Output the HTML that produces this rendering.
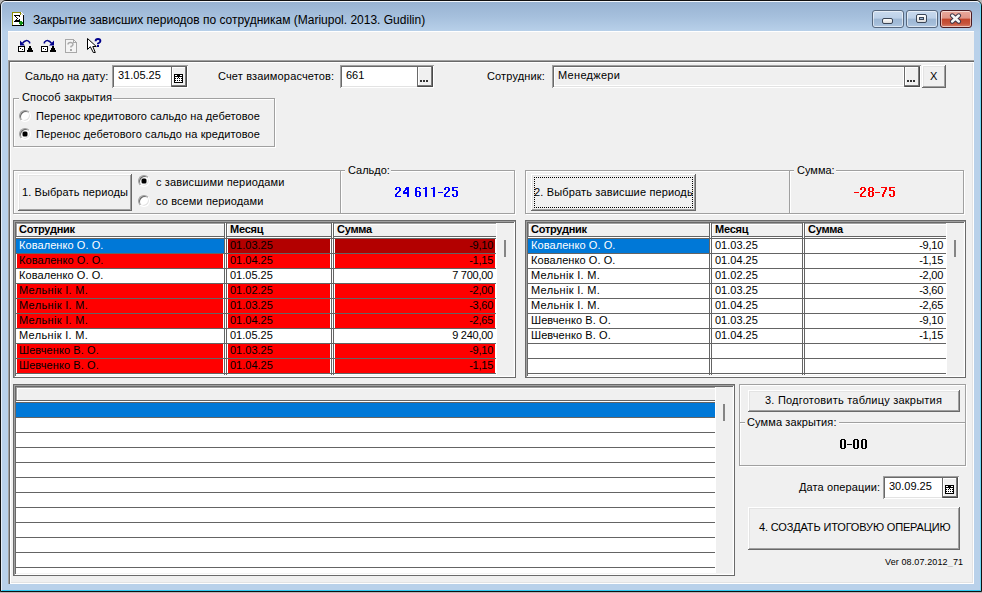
<!DOCTYPE html><html><head><meta charset="utf-8"><style>
*{box-sizing:border-box}
html,body{margin:0;padding:0}
body{width:982px;height:593px;overflow:hidden;position:relative;background:#b8b8b8;font-family:"Liberation Sans",sans-serif;font-size:11px;color:#000}
.a{position:absolute}
.t{position:absolute;white-space:pre;font-size:11px;line-height:11px}
.btn{position:absolute;background:#f0f0f0;box-shadow:inset -1px -1px #696969,inset 1px 1px #fff,inset -2px -2px #a0a0a0,inset 2px 2px #e3e3e3}
.edit{position:absolute;background:#fff;box-shadow:inset 1px 1px #a0a0a0,inset -1px -1px #fff,inset 2px 2px #696969,inset -2px -2px #e3e3e3}
.grp{position:absolute;border:1px solid #a0a0a0;box-shadow:1px 1px 0 #fff,inset 1px 1px 0 #fff}
.radio{position:absolute;width:12px;height:12px;border-radius:50%;background:#fff;border:1px solid;border-color:#a0a0a0 #fff #fff #a0a0a0;box-shadow:inset 1px 1px 0 #696969,inset -1px -1px 0 #e3e3e3}
.radio.on::after{content:"";position:absolute;left:3px;top:3px;width:4px;height:4px;border-radius:1px;background:#000;box-shadow:0 0 0 0.5px #000}
svg{position:absolute;overflow:visible}
</style></head><body>
<div class="a" style="left:0px;top:592px;width:982px;height:1px;background:#b8b8b8"></div>
<div class="a" style="left:0px;top:0px;width:982px;height:592px;border:1px solid #101010;border-radius:6px 6px 0 0;background:#b9d1ea"></div>
<div class="a" style="left:1px;top:1px;width:980px;height:590px;border-radius:5px 5px 0 0;border-top:1px solid #f2f6fb;border-left:1px solid #e4edf7;border-right:1px solid #6fd6f2;border-bottom:1px solid #2ec8f0;background:linear-gradient(#98b3d2 0,#a6c0dd 15px,#b9d1ea 30px,#b9d1ea 100%)"></div>
<svg style="left:11px;top:11px" width="16" height="16" shape-rendering="crispEdges">
<path d="M1 1H10L13 4V15H1Z" fill="#fff"/>
<rect x="1" y="1" width="1" height="13" fill="#8c8c00"/>
<rect x="1" y="1" width="9" height="1" fill="#8c8c00"/>
<rect x="9" y="1" width="1" height="3" fill="#8c8c00"/>
<rect x="10" y="2" width="1" height="1" fill="#c0c0c0"/><rect x="11" y="3" width="1" height="1" fill="#c0c0c0"/>
<rect x="12" y="4" width="1" height="11" fill="#000"/>
<rect x="1" y="14" width="12" height="1" fill="#000"/>
<path d="M3 4H9V6H8V5H5V6H6V7H7V8H6V9H5V9H8V8H9V11H3V10H4V9H5V8H6V7H5V6H4V5H3Z" fill="#000"/>
<rect x="9" y="10" width="2" height="4" fill="#119011"/>
<rect x="8" y="11" width="4" height="2" fill="#119011"/>
</svg>
<div class="t" style="left:33px;top:14px;font-size:12px;line-height:12px;color:#000;">Закрытие зависших периодов по сотрудникам (Mariupol. 2013. Gudilin)</div>
<div class="a" style="left:872px;top:10px;width:32px;height:18px;border:1px solid #56677e;border-radius:3px;background:linear-gradient(#c9daee 0,#bcd0e8 45%,#9db7d4 50%,#a4bdd9 80%,#b4cbe4 100%);box-shadow:inset 0 0 0 1px rgba(255,255,255,.55)"></div>
<div class="a" style="left:906px;top:10px;width:32px;height:18px;border:1px solid #56677e;border-radius:3px;background:linear-gradient(#c9daee 0,#bcd0e8 45%,#9db7d4 50%,#a4bdd9 80%,#b4cbe4 100%);box-shadow:inset 0 0 0 1px rgba(255,255,255,.55)"></div>
<div class="a" style="left:940px;top:10px;width:32px;height:18px;border:1px solid #4b1a20;border-radius:3px;background:linear-gradient(#eaa99c 0,#e09486 45%,#c2452b 50%,#c7553c 80%,#d9826f 100%);box-shadow:inset 0 0 0 1px rgba(255,255,255,.55)"></div>
<div class="a" style="left:882px;top:18px;width:11px;height:6px;border:1px solid #3a4556;border-radius:2px;background:linear-gradient(#fff,#dcdcdc)"></div>
<div class="a" style="left:916px;top:14px;width:11px;height:9px;border:1px solid #3a4556;border-radius:2px;background:linear-gradient(#fff,#dcdcdc)"></div>
<div class="a" style="left:919px;top:17px;width:5px;height:3px;border:1px solid #3a4556;background:#9db7d4"></div>
<svg style="left:949px;top:13px" width="13" height="11">
<path d="M3.2 2.6L9.8 8.4M9.8 2.6L3.2 8.4" stroke="#3b3346" stroke-width="4.6" stroke-linecap="round"/>
<path d="M3.2 2.6L9.8 8.4M9.8 2.6L3.2 8.4" stroke="#f6f6f6" stroke-width="2.6" stroke-linecap="round"/>
</svg>
<div class="a" style="left:8px;top:31px;width:966px;height:553px;background:#f0f0f0"></div>
<div class="a" style="left:8px;top:31px;width:966px;height:1px;background:#fff"></div>
<div class="a" style="left:8px;top:32px;width:1px;height:28px;background:#f5f3f1"></div>
<svg style="left:17px;top:37px" width="17" height="16"><g >
<path d="M5.5 6.2 Q9 1.6 12.6 5.2 L12.6 6.6" fill="none" stroke="#00008b" stroke-width="1.5"/>
<path d="M3 3.6V8.6H8z" fill="#00008b"/></g><g shape-rendering="crispEdges">
<rect x="1" y="9" width="7" height="6" fill="#000"/>
<rect x="2" y="10" width="5" height="4" fill="#fff"/>
<rect x="3" y="11" width="1" height="1" fill="#000"/><rect x="5" y="12" width="1" height="1" fill="#000"/>
<path d="M12 9h2v2h1v2h1v2h-6v-2h1v-2h1z" fill="#000"/>
</g></svg>
<svg style="left:40px;top:37px" width="17" height="16"><g transform="translate(17,0) scale(-1,1)">
<path d="M5.5 6.2 Q9 1.6 12.6 5.2 L12.6 6.6" fill="none" stroke="#00008b" stroke-width="1.5"/>
<path d="M3 3.6V8.6H8z" fill="#00008b"/></g><g shape-rendering="crispEdges">
<rect x="1" y="9" width="7" height="6" fill="#000"/>
<rect x="2" y="10" width="5" height="4" fill="#fff"/>
<rect x="3" y="11" width="1" height="1" fill="#000"/><rect x="5" y="12" width="1" height="1" fill="#000"/>
<path d="M12 9h2v2h1v2h1v2h-6v-2h1v-2h1z" fill="#000"/>
</g></svg>
<svg style="left:64px;top:38px" width="14" height="16" shape-rendering="crispEdges">
<path d="M1.5 1.5h8l3 3v9.5h-11z" fill="#f4f4f4" stroke="#a8a8a8"/>
<path d="M9.5 1.5v3h3" fill="none" stroke="#a8a8a8"/>
<path d="M4 6.5q0-2 2.5-2t2.5 2q0 1.3-2 2v1" fill="none" stroke="#a8a8a8" stroke-width="1.4" shape-rendering="auto"/>
<rect x="5.5" y="10.5" width="2" height="2" fill="#a8a8a8"/>
</svg>
<svg style="left:86px;top:37px" width="17" height="17">
<path d="M1.5 1.5V12.5L4.3 9.7L7.3 15.5H9.3L6.8 9.5H10.3Z" fill="#fff" stroke="#000" stroke-width="1" stroke-linejoin="miter"/>
<path d="M9.6 4.2Q9.6 2 12 2T14.4 4.1Q14.4 5.3 12.9 6L12 6.5V7.3" fill="none" stroke="#00008b" stroke-width="1.9"/>
<rect x="11" y="8" width="2" height="2" fill="#00008b"/>
</svg>
<div class="a" style="left:8px;top:60px;width:966px;height:524px;box-shadow:inset 1px 1px #a0a0a0,inset 2px 2px #696969,inset 3px 3px #fff,inset -1px -1px #fff,inset -2px -2px #e3e3e3"></div>
<div class="t" style="left:25px;top:71px;font-size:11px;line-height:11px;color:#000;">Сальдо на дату:</div>
<div class="edit" style="left:112px;top:65px;width:76px;height:23px;background:#fff"></div>
<div class="t" style="left:118px;top:70px;font-size:11px;line-height:11px;color:#000;">31.05.25</div>
<div class="btn" style="left:171px;top:67px;width:16px;height:20px;box-shadow:inset -1px -1px #4a4a4a,inset -2px -2px #7a7a7a,inset 1px 1px #fff;border-left:1px solid #696969"></div>
<svg style="left:174px;top:74px" width="9" height="9" shape-rendering="crispEdges">
<rect x="0" y="0" width="9" height="9" fill="#000"/><rect x="1" y="1" width="1" height="1" fill="#fff"/><rect x="2" y="1" width="1" height="1" fill="#fff"/><rect x="6" y="1" width="1" height="1" fill="#fff"/><rect x="7" y="1" width="1" height="1" fill="#fff"/><rect x="1" y="3" width="1" height="1" fill="#fff"/><rect x="2" y="3" width="1" height="1" fill="#fff"/><rect x="3" y="3" width="1" height="1" fill="#fff"/><rect x="5" y="3" width="1" height="1" fill="#fff"/><rect x="6" y="3" width="1" height="1" fill="#fff"/><rect x="7" y="3" width="1" height="1" fill="#fff"/><rect x="2" y="4" width="1" height="1" fill="#fff"/><rect x="4" y="4" width="1" height="1" fill="#fff"/><rect x="6" y="4" width="1" height="1" fill="#fff"/><rect x="1" y="5" width="1" height="1" fill="#fff"/><rect x="2" y="5" width="1" height="1" fill="#fff"/><rect x="3" y="5" width="1" height="1" fill="#fff"/><rect x="4" y="5" width="1" height="1" fill="#fff"/><rect x="5" y="5" width="1" height="1" fill="#fff"/><rect x="6" y="5" width="1" height="1" fill="#fff"/><rect x="7" y="5" width="1" height="1" fill="#fff"/><rect x="2" y="6" width="1" height="1" fill="#fff"/><rect x="4" y="6" width="1" height="1" fill="#fff"/><rect x="6" y="6" width="1" height="1" fill="#fff"/><rect x="1" y="7" width="1" height="1" fill="#fff"/><rect x="2" y="7" width="1" height="1" fill="#fff"/><rect x="3" y="7" width="1" height="1" fill="#fff"/><rect x="4" y="7" width="1" height="1" fill="#fff"/><rect x="5" y="7" width="1" height="1" fill="#fff"/><rect x="6" y="7" width="1" height="1" fill="#fff"/><rect x="7" y="7" width="1" height="1" fill="#fff"/>
</svg>
<div class="t" style="left:218px;top:71px;font-size:11px;line-height:11px;color:#000;letter-spacing:0.16px;">Счет взаиморасчетов:</div>
<div class="edit" style="left:340px;top:65px;width:94px;height:23px;background:#fff"></div>
<div class="t" style="left:346px;top:70px;font-size:11px;line-height:11px;color:#000;">661</div>
<div class="btn" style="left:417px;top:67px;width:16px;height:20px;box-shadow:inset -1px -1px #4a4a4a,inset -2px -2px #7a7a7a,inset 1px 1px #fff;border-left:1px solid #696969"></div>
<svg style="left:420px;top:80px" width="9" height="2" shape-rendering="crispEdges" fill="#333"><rect x="0" y="0" width="2" height="2"/><rect x="3" y="0" width="2" height="2"/><rect x="6" y="0" width="2" height="2"/></svg>
<div class="t" style="left:487px;top:71px;font-size:11px;line-height:11px;color:#000;letter-spacing:0.15px;">Сотрудник:</div>
<div class="edit" style="left:552px;top:65px;width:369px;height:23px;background:#f0f0f0"></div>
<div class="a" style="left:554px;top:67px;width:350px;height:19px;border:1px solid #fff"></div>
<div class="t" style="left:558px;top:70px;font-size:11px;line-height:11px;color:#000;letter-spacing:0.3px;">Менеджери</div>
<div class="btn" style="left:904px;top:67px;width:16px;height:20px;box-shadow:inset -1px -1px #4a4a4a,inset -2px -2px #7a7a7a,inset 1px 1px #fff;border-left:1px solid #696969"></div>
<svg style="left:907px;top:80px" width="9" height="2" shape-rendering="crispEdges" fill="#333"><rect x="0" y="0" width="2" height="2"/><rect x="3" y="0" width="2" height="2"/><rect x="6" y="0" width="2" height="2"/></svg>
<div class="btn" style="left:922px;top:65px;width:24px;height:23px;"></div>
<div class="t" style="left:930px;top:71px;font-size:11px;line-height:11px;color:#000;">X</div>
<div class="grp" style="left:13px;top:98px;width:262px;height:49px"></div>
<div class="a" style="left:19px;top:92px;width:94px;height:12px;background:#f0f0f0"></div>
<div class="t" style="left:22px;top:92px;font-size:11px;line-height:11px;color:#000;letter-spacing:0.12px;">Способ закрытия</div>
<div class="radio" style="left:19px;top:110px"></div>
<div class="t" style="left:36px;top:111px;font-size:11px;line-height:11px;color:#000;letter-spacing:0.1px;">Перенос кредитового сальдо на дебетовое</div>
<div class="radio on" style="left:19px;top:128px"></div>
<div class="t" style="left:36px;top:129px;font-size:11px;line-height:11px;color:#000;letter-spacing:0.1px;">Перенос дебетового сальдо на кредитовое</div>
<div class="grp" style="left:13px;top:170px;width:328px;height:44px"></div>
<div class="btn" style="left:18px;top:174px;width:114px;height:37px;"></div>
<div class="t" style="left:22px;top:187px;font-size:11px;line-height:11px;color:#000;letter-spacing:0.1px;">1. Выбрать периоды</div>
<div class="radio on" style="left:138px;top:175px"></div>
<div class="t" style="left:156px;top:177px;font-size:11px;line-height:11px;color:#000;letter-spacing:0.15px;">с зависшими периодами</div>
<div class="radio" style="left:138px;top:195px"></div>
<div class="t" style="left:156px;top:196px;font-size:11px;line-height:11px;color:#000;letter-spacing:0.12px;">со всеми периодами</div>
<div class="grp" style="left:340px;top:170px;width:175px;height:44px"></div>
<div class="a" style="left:345px;top:164px;width:46px;height:12px;background:#f0f0f0"></div>
<div class="t" style="left:348px;top:165px;font-size:11px;line-height:11px;color:#000;">Сальдо:</div>
<svg style="left:395px;top:187px" width="63" height="10" shape-rendering="crispEdges" fill="#0000ff"><rect x="1" y="0" width="4" height="1"/><rect x="0" y="1" width="2" height="1"/><rect x="4" y="1" width="2" height="1"/><rect x="0" y="2" width="2" height="1"/><rect x="4" y="2" width="2" height="1"/><rect x="4" y="3" width="2" height="1"/><rect x="3" y="4" width="2" height="1"/><rect x="2" y="5" width="2" height="1"/><rect x="1" y="6" width="2" height="1"/><rect x="0" y="7" width="2" height="1"/><rect x="0" y="8" width="2" height="1"/><rect x="0" y="9" width="6" height="1"/><rect x="11" y="0" width="3" height="1"/><rect x="10" y="1" width="4" height="1"/><rect x="10" y="2" width="4" height="1"/><rect x="9" y="3" width="2" height="1"/><rect x="12" y="3" width="2" height="1"/><rect x="8" y="4" width="2" height="1"/><rect x="12" y="4" width="2" height="1"/><rect x="8" y="5" width="6" height="1"/><rect x="8" y="6" width="6" height="1"/><rect x="12" y="7" width="2" height="1"/><rect x="12" y="8" width="2" height="1"/><rect x="12" y="9" width="2" height="1"/><rect x="21" y="0" width="4" height="1"/><rect x="20" y="1" width="2" height="1"/><rect x="24" y="1" width="2" height="1"/><rect x="20" y="2" width="2" height="1"/><rect x="20" y="3" width="2" height="1"/><rect x="20" y="4" width="5" height="1"/><rect x="20" y="5" width="2" height="1"/><rect x="24" y="5" width="2" height="1"/><rect x="20" y="6" width="2" height="1"/><rect x="24" y="6" width="2" height="1"/><rect x="20" y="7" width="2" height="1"/><rect x="24" y="7" width="2" height="1"/><rect x="20" y="8" width="2" height="1"/><rect x="24" y="8" width="2" height="1"/><rect x="21" y="9" width="4" height="1"/><rect x="30" y="0" width="2" height="1"/><rect x="28" y="1" width="4" height="1"/><rect x="30" y="2" width="2" height="1"/><rect x="30" y="3" width="2" height="1"/><rect x="30" y="4" width="2" height="1"/><rect x="30" y="5" width="2" height="1"/><rect x="30" y="6" width="2" height="1"/><rect x="30" y="7" width="2" height="1"/><rect x="30" y="8" width="2" height="1"/><rect x="30" y="9" width="2" height="1"/><rect x="38" y="0" width="2" height="1"/><rect x="36" y="1" width="4" height="1"/><rect x="38" y="2" width="2" height="1"/><rect x="38" y="3" width="2" height="1"/><rect x="38" y="4" width="2" height="1"/><rect x="38" y="5" width="2" height="1"/><rect x="38" y="6" width="2" height="1"/><rect x="38" y="7" width="2" height="1"/><rect x="38" y="8" width="2" height="1"/><rect x="38" y="9" width="2" height="1"/><rect x="43" y="5" width="5" height="1"/><rect x="50" y="0" width="4" height="1"/><rect x="49" y="1" width="2" height="1"/><rect x="53" y="1" width="2" height="1"/><rect x="49" y="2" width="2" height="1"/><rect x="53" y="2" width="2" height="1"/><rect x="53" y="3" width="2" height="1"/><rect x="52" y="4" width="2" height="1"/><rect x="51" y="5" width="2" height="1"/><rect x="50" y="6" width="2" height="1"/><rect x="49" y="7" width="2" height="1"/><rect x="49" y="8" width="2" height="1"/><rect x="49" y="9" width="6" height="1"/><rect x="57" y="0" width="6" height="1"/><rect x="57" y="1" width="2" height="1"/><rect x="57" y="2" width="2" height="1"/><rect x="57" y="3" width="5" height="1"/><rect x="61" y="4" width="2" height="1"/><rect x="61" y="5" width="2" height="1"/><rect x="61" y="6" width="2" height="1"/><rect x="57" y="7" width="2" height="1"/><rect x="61" y="7" width="2" height="1"/><rect x="57" y="8" width="2" height="1"/><rect x="61" y="8" width="2" height="1"/><rect x="58" y="9" width="4" height="1"/></svg>
<div class="grp" style="left:525px;top:170px;width:265px;height:44px"></div>
<div class="btn" style="left:531px;top:174px;width:165px;height:37px;"></div>
<div class="a" style="left:534px;top:177px;width:159px;height:31px;border:1px dotted #000"></div>
<div class="a" style="left:534px;top:177px;width:159px;height:31px;overflow:hidden"><div class="t" style="left:0px;top:10px;letter-spacing:0.15px">2. Выбрать зависшие периоды</div></div>
<div class="grp" style="left:789px;top:170px;width:175px;height:44px"></div>
<div class="a" style="left:794px;top:164px;width:42px;height:12px;background:#f0f0f0"></div>
<div class="t" style="left:797px;top:165px;font-size:11px;line-height:11px;color:#000;">Сумма:</div>
<svg style="left:854px;top:187px" width="41" height="10" shape-rendering="crispEdges" fill="#ff0000"><rect x="0" y="5" width="5" height="1"/><rect x="7" y="0" width="4" height="1"/><rect x="6" y="1" width="2" height="1"/><rect x="10" y="1" width="2" height="1"/><rect x="6" y="2" width="2" height="1"/><rect x="10" y="2" width="2" height="1"/><rect x="10" y="3" width="2" height="1"/><rect x="9" y="4" width="2" height="1"/><rect x="8" y="5" width="2" height="1"/><rect x="7" y="6" width="2" height="1"/><rect x="6" y="7" width="2" height="1"/><rect x="6" y="8" width="2" height="1"/><rect x="6" y="9" width="6" height="1"/><rect x="15" y="0" width="4" height="1"/><rect x="14" y="1" width="2" height="1"/><rect x="18" y="1" width="2" height="1"/><rect x="14" y="2" width="2" height="1"/><rect x="18" y="2" width="2" height="1"/><rect x="14" y="3" width="2" height="1"/><rect x="18" y="3" width="2" height="1"/><rect x="15" y="4" width="4" height="1"/><rect x="14" y="5" width="2" height="1"/><rect x="18" y="5" width="2" height="1"/><rect x="14" y="6" width="2" height="1"/><rect x="18" y="6" width="2" height="1"/><rect x="14" y="7" width="2" height="1"/><rect x="18" y="7" width="2" height="1"/><rect x="14" y="8" width="2" height="1"/><rect x="18" y="8" width="2" height="1"/><rect x="15" y="9" width="4" height="1"/><rect x="21" y="5" width="5" height="1"/><rect x="27" y="0" width="6" height="1"/><rect x="31" y="1" width="2" height="1"/><rect x="31" y="2" width="2" height="1"/><rect x="30" y="3" width="2" height="1"/><rect x="30" y="4" width="2" height="1"/><rect x="29" y="5" width="2" height="1"/><rect x="29" y="6" width="2" height="1"/><rect x="28" y="7" width="2" height="1"/><rect x="28" y="8" width="2" height="1"/><rect x="28" y="9" width="2" height="1"/><rect x="35" y="0" width="6" height="1"/><rect x="35" y="1" width="2" height="1"/><rect x="35" y="2" width="2" height="1"/><rect x="35" y="3" width="5" height="1"/><rect x="39" y="4" width="2" height="1"/><rect x="39" y="5" width="2" height="1"/><rect x="39" y="6" width="2" height="1"/><rect x="35" y="7" width="2" height="1"/><rect x="39" y="7" width="2" height="1"/><rect x="35" y="8" width="2" height="1"/><rect x="39" y="8" width="2" height="1"/><rect x="36" y="9" width="4" height="1"/></svg>
<div class="a" style="left:13px;top:220px;width:503px;height:158px;background:#f0f0f0;box-shadow:inset 1px 1px #6a6a6a,inset -1px -1px #6a6a6a,inset 2px 2px #a0a0a0,inset -2px -2px #fff,inset 3px 3px #696969,inset -3px -3px #f4f4f4"></div>
<div class="a" style="left:16px;top:223px;width:497px;height:152px;overflow:hidden">
<div class="a" style="left:0px;top:0px;width:208px;height:14px;background:#f0f0f0;box-shadow:inset 0 -1px #646464,inset 1px 0 #a0a0a0,inset 0 1px #a0a0a0,inset 2px 2px #fff"></div>
<div class="t" style="left:3px;top:1px;font-weight:bold;color:#000;letter-spacing:-0.25px">Сотрудник</div>
<div class="a" style="left:211px;top:0px;width:104px;height:14px;background:#f0f0f0;box-shadow:inset 0 -1px #646464,inset 0 1px #a0a0a0,inset 1px 2px #fff"></div>
<div class="t" style="left:214px;top:1px;font-weight:bold;color:#000;letter-spacing:-0.25px">Месяц</div>
<div class="a" style="left:318px;top:0px;width:162px;height:14px;background:#f0f0f0;box-shadow:inset 0 -1px #646464,inset 0 1px #a0a0a0,inset 1px 2px #fff"></div>
<div class="t" style="left:321px;top:1px;font-weight:bold;color:#000;letter-spacing:-0.25px">Сумма</div>
<div class="a" style="left:0px;top:14px;width:480px;height:1px;background:#fff"></div>
<div class="a" style="left:0px;top:15px;width:480px;height:137px;background:#fff"></div>
<div class="a" style="left:208px;top:0px;width:3px;height:152px;background:#fff;border-left:1px solid #646464;border-right:1px solid #646464"></div>
<div class="a" style="left:315px;top:0px;width:3px;height:152px;background:#fff;border-left:1px solid #646464;border-right:1px solid #646464"></div>
<div class="a" style="left:0px;top:15px;width:480px;height:1px;background:#646464"></div>
<div class="a" style="left:0px;top:16px;width:208px;height:14px;background:#0078d7"></div>
<div class="t" style="left:3px;top:17px;color:#fff;letter-spacing:0.07px">Коваленко О. О.</div>
<div class="a" style="left:212px;top:16px;width:102px;height:14px;background:#b30000"></div>
<div class="t" style="left:214px;top:17px;color:#000;">01.03.25</div>
<div class="a" style="left:319px;top:16px;width:160px;height:14px;background:#b30000"></div>
<div class="t" style="right:20px;top:17px;color:#000;letter-spacing:-0.25px">-9,10</div>
<div class="a" style="left:0px;top:30px;width:480px;height:1px;background:#646464"></div>
<div class="a" style="left:1px;top:31px;width:206px;height:14px;background:#ff0000"></div>
<div class="t" style="left:3px;top:32px;color:#000;letter-spacing:0.07px">Коваленко О. О.</div>
<div class="a" style="left:212px;top:31px;width:102px;height:14px;background:#ff0000"></div>
<div class="t" style="left:214px;top:32px;color:#000;">01.04.25</div>
<div class="a" style="left:319px;top:31px;width:160px;height:14px;background:#ff0000"></div>
<div class="t" style="right:20px;top:32px;color:#000;letter-spacing:-0.25px">-1,15</div>
<div class="a" style="left:0px;top:45px;width:480px;height:1px;background:#646464"></div>
<div class="t" style="left:3px;top:47px;color:#000;letter-spacing:0.07px">Коваленко О. О.</div>
<div class="t" style="left:214px;top:47px;color:#000;">01.05.25</div>
<div class="t" style="right:20px;top:47px;color:#000;letter-spacing:-0.25px">7 700,00</div>
<div class="a" style="left:0px;top:60px;width:480px;height:1px;background:#646464"></div>
<div class="a" style="left:1px;top:61px;width:206px;height:14px;background:#ff0000"></div>
<div class="t" style="left:3px;top:62px;color:#000;letter-spacing:0.33px">Мельнік І. М.</div>
<div class="a" style="left:212px;top:61px;width:102px;height:14px;background:#ff0000"></div>
<div class="t" style="left:214px;top:62px;color:#000;">01.02.25</div>
<div class="a" style="left:319px;top:61px;width:160px;height:14px;background:#ff0000"></div>
<div class="t" style="right:20px;top:62px;color:#000;letter-spacing:-0.25px">-2,00</div>
<div class="a" style="left:0px;top:75px;width:480px;height:1px;background:#646464"></div>
<div class="a" style="left:1px;top:76px;width:206px;height:14px;background:#ff0000"></div>
<div class="t" style="left:3px;top:77px;color:#000;letter-spacing:0.33px">Мельнік І. М.</div>
<div class="a" style="left:212px;top:76px;width:102px;height:14px;background:#ff0000"></div>
<div class="t" style="left:214px;top:77px;color:#000;">01.03.25</div>
<div class="a" style="left:319px;top:76px;width:160px;height:14px;background:#ff0000"></div>
<div class="t" style="right:20px;top:77px;color:#000;letter-spacing:-0.25px">-3,60</div>
<div class="a" style="left:0px;top:90px;width:480px;height:1px;background:#646464"></div>
<div class="a" style="left:1px;top:91px;width:206px;height:14px;background:#ff0000"></div>
<div class="t" style="left:3px;top:92px;color:#000;letter-spacing:0.33px">Мельнік І. М.</div>
<div class="a" style="left:212px;top:91px;width:102px;height:14px;background:#ff0000"></div>
<div class="t" style="left:214px;top:92px;color:#000;">01.04.25</div>
<div class="a" style="left:319px;top:91px;width:160px;height:14px;background:#ff0000"></div>
<div class="t" style="right:20px;top:92px;color:#000;letter-spacing:-0.25px">-2,65</div>
<div class="a" style="left:0px;top:105px;width:480px;height:1px;background:#646464"></div>
<div class="t" style="left:3px;top:107px;color:#000;letter-spacing:0.33px">Мельнік І. М.</div>
<div class="t" style="left:214px;top:107px;color:#000;">01.05.25</div>
<div class="t" style="right:20px;top:107px;color:#000;letter-spacing:-0.25px">9 240,00</div>
<div class="a" style="left:0px;top:120px;width:480px;height:1px;background:#646464"></div>
<div class="a" style="left:1px;top:121px;width:206px;height:14px;background:#ff0000"></div>
<div class="t" style="left:3px;top:122px;color:#000;letter-spacing:0.08px">Шевченко В. О.</div>
<div class="a" style="left:212px;top:121px;width:102px;height:14px;background:#ff0000"></div>
<div class="t" style="left:214px;top:122px;color:#000;">01.03.25</div>
<div class="a" style="left:319px;top:121px;width:160px;height:14px;background:#ff0000"></div>
<div class="t" style="right:20px;top:122px;color:#000;letter-spacing:-0.25px">-9,10</div>
<div class="a" style="left:0px;top:135px;width:480px;height:1px;background:#646464"></div>
<div class="a" style="left:1px;top:136px;width:206px;height:14px;background:#ff0000"></div>
<div class="t" style="left:3px;top:137px;color:#000;letter-spacing:0.08px">Шевченко В. О.</div>
<div class="a" style="left:212px;top:136px;width:102px;height:14px;background:#ff0000"></div>
<div class="t" style="left:214px;top:137px;color:#000;">01.04.25</div>
<div class="a" style="left:319px;top:136px;width:160px;height:14px;background:#ff0000"></div>
<div class="t" style="right:20px;top:137px;color:#000;letter-spacing:-0.25px">-1,15</div>
<div class="a" style="left:0px;top:150px;width:480px;height:1px;background:#646464"></div>
<div class="a" style="left:480px;top:0px;width:17px;height:152px;background:#f0f0f0"></div>
<div class="a" style="left:480px;top:0px;width:1px;height:152px;background:#fff"></div>
</div>
<div class="a" style="left:504px;top:240px;width:2px;height:17px;background:#858585"></div>
<div class="a" style="left:525px;top:220px;width:441px;height:158px;background:#f0f0f0;box-shadow:inset 1px 1px #6a6a6a,inset -1px -1px #6a6a6a,inset 2px 2px #a0a0a0,inset -2px -2px #fff,inset 3px 3px #696969,inset -3px -3px #f4f4f4"></div>
<div class="a" style="left:528px;top:223px;width:435px;height:152px;overflow:hidden">
<div class="a" style="left:0px;top:0px;width:181px;height:14px;background:#f0f0f0;box-shadow:inset 0 -1px #646464,inset 1px 0 #a0a0a0,inset 0 1px #a0a0a0,inset 2px 2px #fff"></div>
<div class="t" style="left:3px;top:1px;font-weight:bold;color:#000;letter-spacing:-0.25px">Сотрудник</div>
<div class="a" style="left:184px;top:0px;width:90px;height:14px;background:#f0f0f0;box-shadow:inset 0 -1px #646464,inset 0 1px #a0a0a0,inset 1px 2px #fff"></div>
<div class="t" style="left:187px;top:1px;font-weight:bold;color:#000;letter-spacing:-0.25px">Месяц</div>
<div class="a" style="left:277px;top:0px;width:141px;height:14px;background:#f0f0f0;box-shadow:inset 0 -1px #646464,inset 0 1px #a0a0a0,inset 1px 2px #fff"></div>
<div class="t" style="left:280px;top:1px;font-weight:bold;color:#000;letter-spacing:-0.25px">Сумма</div>
<div class="a" style="left:0px;top:14px;width:418px;height:1px;background:#fff"></div>
<div class="a" style="left:0px;top:15px;width:418px;height:137px;background:#fff"></div>
<div class="a" style="left:181px;top:0px;width:3px;height:152px;background:#fff;border-left:1px solid #646464;border-right:1px solid #646464"></div>
<div class="a" style="left:274px;top:0px;width:3px;height:152px;background:#fff;border-left:1px solid #646464;border-right:1px solid #646464"></div>
<div class="a" style="left:0px;top:15px;width:418px;height:1px;background:#646464"></div>
<div class="a" style="left:0px;top:16px;width:181px;height:14px;background:#0078d7"></div>
<div class="t" style="left:3px;top:17px;color:#fff;letter-spacing:0.07px">Коваленко О. О.</div>
<div class="t" style="left:187px;top:17px;color:#000;">01.03.25</div>
<div class="t" style="right:20px;top:17px;color:#000;letter-spacing:-0.25px">-9,10</div>
<div class="a" style="left:0px;top:30px;width:418px;height:1px;background:#646464"></div>
<div class="t" style="left:3px;top:32px;color:#000;letter-spacing:0.07px">Коваленко О. О.</div>
<div class="t" style="left:187px;top:32px;color:#000;">01.04.25</div>
<div class="t" style="right:20px;top:32px;color:#000;letter-spacing:-0.25px">-1,15</div>
<div class="a" style="left:0px;top:45px;width:418px;height:1px;background:#646464"></div>
<div class="t" style="left:3px;top:47px;color:#000;letter-spacing:0.33px">Мельнік І. М.</div>
<div class="t" style="left:187px;top:47px;color:#000;">01.02.25</div>
<div class="t" style="right:20px;top:47px;color:#000;letter-spacing:-0.25px">-2,00</div>
<div class="a" style="left:0px;top:60px;width:418px;height:1px;background:#646464"></div>
<div class="t" style="left:3px;top:62px;color:#000;letter-spacing:0.33px">Мельнік І. М.</div>
<div class="t" style="left:187px;top:62px;color:#000;">01.03.25</div>
<div class="t" style="right:20px;top:62px;color:#000;letter-spacing:-0.25px">-3,60</div>
<div class="a" style="left:0px;top:75px;width:418px;height:1px;background:#646464"></div>
<div class="t" style="left:3px;top:77px;color:#000;letter-spacing:0.33px">Мельнік І. М.</div>
<div class="t" style="left:187px;top:77px;color:#000;">01.04.25</div>
<div class="t" style="right:20px;top:77px;color:#000;letter-spacing:-0.25px">-2,65</div>
<div class="a" style="left:0px;top:90px;width:418px;height:1px;background:#646464"></div>
<div class="t" style="left:3px;top:92px;color:#000;letter-spacing:0.08px">Шевченко В. О.</div>
<div class="t" style="left:187px;top:92px;color:#000;">01.03.25</div>
<div class="t" style="right:20px;top:92px;color:#000;letter-spacing:-0.25px">-9,10</div>
<div class="a" style="left:0px;top:105px;width:418px;height:1px;background:#646464"></div>
<div class="t" style="left:3px;top:107px;color:#000;letter-spacing:0.08px">Шевченко В. О.</div>
<div class="t" style="left:187px;top:107px;color:#000;">01.04.25</div>
<div class="t" style="right:20px;top:107px;color:#000;letter-spacing:-0.25px">-1,15</div>
<div class="a" style="left:0px;top:120px;width:418px;height:1px;background:#646464"></div>
<div class="a" style="left:0px;top:135px;width:418px;height:1px;background:#646464"></div>
<div class="a" style="left:0px;top:150px;width:418px;height:1px;background:#646464"></div>
<div class="a" style="left:418px;top:0px;width:17px;height:152px;background:#f0f0f0"></div>
<div class="a" style="left:418px;top:0px;width:1px;height:152px;background:#fff"></div>
</div>
<div class="a" style="left:954px;top:240px;width:2px;height:17px;background:#858585"></div>
<div class="a" style="left:13px;top:384px;width:722px;height:192px;background:#f0f0f0;box-shadow:inset 1px 1px #6a6a6a,inset -1px -1px #6a6a6a,inset 2px 2px #a0a0a0,inset -2px -2px #fff,inset 3px 3px #696969,inset -3px -3px #f4f4f4"></div>
<div class="a" style="left:16px;top:387px;width:716px;height:186px;overflow:hidden">
<div class="a" style="left:0px;top:0px;width:699px;height:14px;background:#f0f0f0;box-shadow:inset 0 -1px #646464,inset 1px 0 #a0a0a0,inset 0 1px #a0a0a0,inset 2px 2px #fff"></div>
<div class="a" style="left:0px;top:14px;width:699px;height:1px;background:#fff"></div>
<div class="a" style="left:0px;top:15px;width:699px;height:171px;background:#fff"></div>
<div class="a" style="left:0px;top:15px;width:699px;height:1px;background:#646464"></div>
<div class="a" style="left:0px;top:16px;width:699px;height:14px;background:#0078d7"></div>
<div class="a" style="left:0px;top:30px;width:699px;height:1px;background:#646464"></div>
<div class="a" style="left:0px;top:45px;width:699px;height:1px;background:#646464"></div>
<div class="a" style="left:0px;top:60px;width:699px;height:1px;background:#646464"></div>
<div class="a" style="left:0px;top:75px;width:699px;height:1px;background:#646464"></div>
<div class="a" style="left:0px;top:90px;width:699px;height:1px;background:#646464"></div>
<div class="a" style="left:0px;top:105px;width:699px;height:1px;background:#646464"></div>
<div class="a" style="left:0px;top:120px;width:699px;height:1px;background:#646464"></div>
<div class="a" style="left:0px;top:135px;width:699px;height:1px;background:#646464"></div>
<div class="a" style="left:0px;top:150px;width:699px;height:1px;background:#646464"></div>
<div class="a" style="left:0px;top:165px;width:699px;height:1px;background:#646464"></div>
<div class="a" style="left:0px;top:180px;width:699px;height:1px;background:#646464"></div>
<div class="a" style="left:0px;top:195px;width:699px;height:1px;background:#646464"></div>
<div class="a" style="left:699px;top:0px;width:17px;height:186px;background:#f0f0f0"></div>
<div class="a" style="left:699px;top:0px;width:1px;height:186px;background:#fff"></div>
</div>
<div class="a" style="left:723px;top:404px;width:2px;height:17px;background:#858585"></div>
<div class="grp" style="left:739px;top:384px;width:227px;height:82px"></div>
<div class="btn" style="left:748px;top:390px;width:212px;height:22px;"></div>
<div class="t" style="left:765px;top:395px;font-size:11px;line-height:11px;color:#000;letter-spacing:0.22px;">3. Подготовить таблицу закрытия</div>
<div class="a" style="left:739px;top:422px;width:227px;height:1px;background:#a0a0a0"></div>
<div class="a" style="left:740px;top:423px;width:225px;height:1px;background:#fff"></div>
<div class="a" style="left:745px;top:417px;width:94px;height:12px;background:#f0f0f0"></div>
<div class="t" style="left:747px;top:417px;font-size:11px;line-height:11px;color:#000;letter-spacing:0.12px;">Сумма закрытия:</div>
<svg style="left:840px;top:439px" width="27" height="10" shape-rendering="crispEdges" fill="#000"><rect x="1" y="0" width="4" height="1"/><rect x="0" y="1" width="2" height="1"/><rect x="4" y="1" width="2" height="1"/><rect x="0" y="2" width="2" height="1"/><rect x="4" y="2" width="2" height="1"/><rect x="0" y="3" width="2" height="1"/><rect x="4" y="3" width="2" height="1"/><rect x="0" y="4" width="2" height="1"/><rect x="4" y="4" width="2" height="1"/><rect x="0" y="5" width="2" height="1"/><rect x="4" y="5" width="2" height="1"/><rect x="0" y="6" width="2" height="1"/><rect x="4" y="6" width="2" height="1"/><rect x="0" y="7" width="2" height="1"/><rect x="4" y="7" width="2" height="1"/><rect x="0" y="8" width="2" height="1"/><rect x="4" y="8" width="2" height="1"/><rect x="1" y="9" width="4" height="1"/><rect x="7" y="5" width="5" height="1"/><rect x="14" y="0" width="4" height="1"/><rect x="13" y="1" width="2" height="1"/><rect x="17" y="1" width="2" height="1"/><rect x="13" y="2" width="2" height="1"/><rect x="17" y="2" width="2" height="1"/><rect x="13" y="3" width="2" height="1"/><rect x="17" y="3" width="2" height="1"/><rect x="13" y="4" width="2" height="1"/><rect x="17" y="4" width="2" height="1"/><rect x="13" y="5" width="2" height="1"/><rect x="17" y="5" width="2" height="1"/><rect x="13" y="6" width="2" height="1"/><rect x="17" y="6" width="2" height="1"/><rect x="13" y="7" width="2" height="1"/><rect x="17" y="7" width="2" height="1"/><rect x="13" y="8" width="2" height="1"/><rect x="17" y="8" width="2" height="1"/><rect x="14" y="9" width="4" height="1"/><rect x="22" y="0" width="4" height="1"/><rect x="21" y="1" width="2" height="1"/><rect x="25" y="1" width="2" height="1"/><rect x="21" y="2" width="2" height="1"/><rect x="25" y="2" width="2" height="1"/><rect x="21" y="3" width="2" height="1"/><rect x="25" y="3" width="2" height="1"/><rect x="21" y="4" width="2" height="1"/><rect x="25" y="4" width="2" height="1"/><rect x="21" y="5" width="2" height="1"/><rect x="25" y="5" width="2" height="1"/><rect x="21" y="6" width="2" height="1"/><rect x="25" y="6" width="2" height="1"/><rect x="21" y="7" width="2" height="1"/><rect x="25" y="7" width="2" height="1"/><rect x="21" y="8" width="2" height="1"/><rect x="25" y="8" width="2" height="1"/><rect x="22" y="9" width="4" height="1"/></svg>
<div class="t" style="left:799px;top:482px;font-size:11px;line-height:11px;color:#000;letter-spacing:0.12px;">Дата операции:</div>
<div class="edit" style="left:883px;top:476px;width:76px;height:23px;background:#fff"></div>
<div class="t" style="left:889px;top:481px;font-size:11px;line-height:11px;color:#000;">30.09.25</div>
<div class="btn" style="left:942px;top:478px;width:16px;height:20px;box-shadow:inset -1px -1px #4a4a4a,inset -2px -2px #7a7a7a,inset 1px 1px #fff;border-left:1px solid #696969"></div>
<svg style="left:945px;top:485px" width="9" height="9" shape-rendering="crispEdges">
<rect x="0" y="0" width="9" height="9" fill="#000"/><rect x="1" y="1" width="1" height="1" fill="#fff"/><rect x="2" y="1" width="1" height="1" fill="#fff"/><rect x="6" y="1" width="1" height="1" fill="#fff"/><rect x="7" y="1" width="1" height="1" fill="#fff"/><rect x="1" y="3" width="1" height="1" fill="#fff"/><rect x="2" y="3" width="1" height="1" fill="#fff"/><rect x="3" y="3" width="1" height="1" fill="#fff"/><rect x="5" y="3" width="1" height="1" fill="#fff"/><rect x="6" y="3" width="1" height="1" fill="#fff"/><rect x="7" y="3" width="1" height="1" fill="#fff"/><rect x="2" y="4" width="1" height="1" fill="#fff"/><rect x="4" y="4" width="1" height="1" fill="#fff"/><rect x="6" y="4" width="1" height="1" fill="#fff"/><rect x="1" y="5" width="1" height="1" fill="#fff"/><rect x="2" y="5" width="1" height="1" fill="#fff"/><rect x="3" y="5" width="1" height="1" fill="#fff"/><rect x="4" y="5" width="1" height="1" fill="#fff"/><rect x="5" y="5" width="1" height="1" fill="#fff"/><rect x="6" y="5" width="1" height="1" fill="#fff"/><rect x="7" y="5" width="1" height="1" fill="#fff"/><rect x="2" y="6" width="1" height="1" fill="#fff"/><rect x="4" y="6" width="1" height="1" fill="#fff"/><rect x="6" y="6" width="1" height="1" fill="#fff"/><rect x="1" y="7" width="1" height="1" fill="#fff"/><rect x="2" y="7" width="1" height="1" fill="#fff"/><rect x="3" y="7" width="1" height="1" fill="#fff"/><rect x="4" y="7" width="1" height="1" fill="#fff"/><rect x="5" y="7" width="1" height="1" fill="#fff"/><rect x="6" y="7" width="1" height="1" fill="#fff"/><rect x="7" y="7" width="1" height="1" fill="#fff"/>
</svg>
<div class="btn" style="left:748px;top:507px;width:212px;height:43px;"></div>
<div class="t" style="left:759px;top:522px;font-size:11px;line-height:11px;color:#000;letter-spacing:-0.15px;">4. СОЗДАТЬ ИТОГОВУЮ ОПЕРАЦИЮ</div>
<div class="t" style="left:885px;top:558px;font-size:9px;line-height:9px;color:#000;letter-spacing:0.12px;">Ver 08.07.2012<span style="color:#b0b0b0">_</span>71</div>
</body></html>
